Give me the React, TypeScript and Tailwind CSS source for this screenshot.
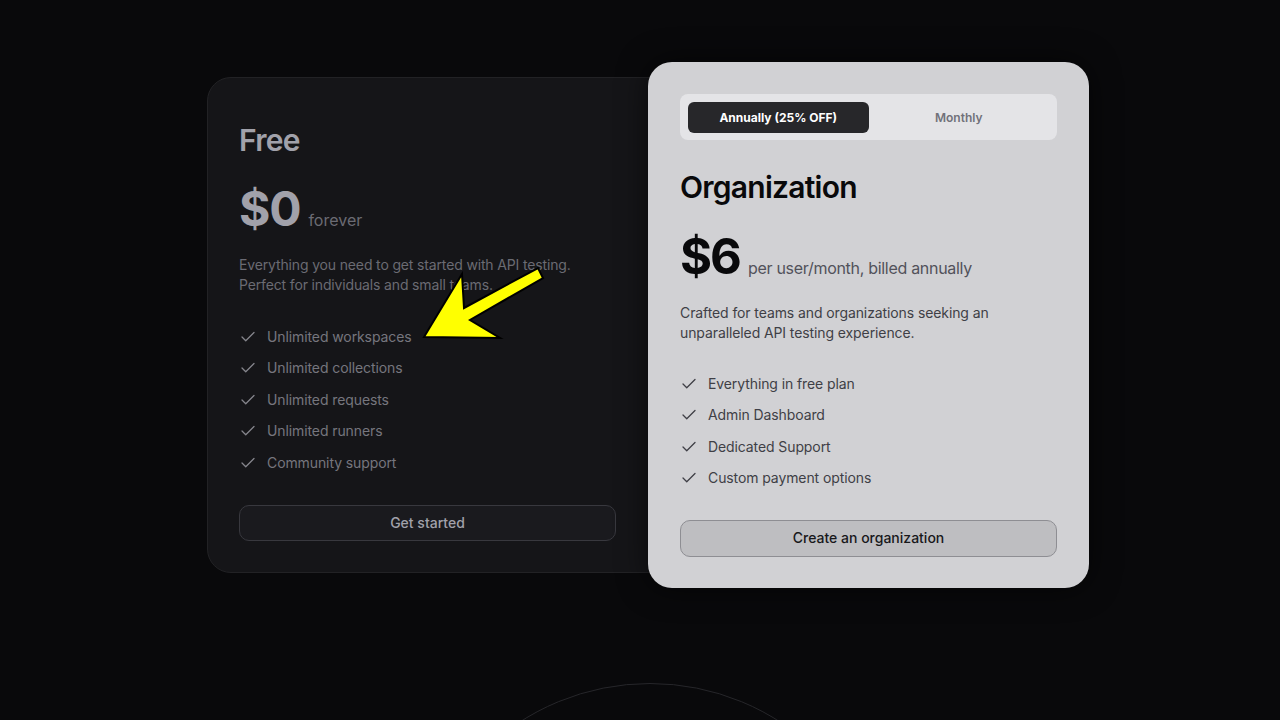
import { Check } from "lucide-react";

const freeFeatures = [
  "Unlimited workspaces",
  "Unlimited collections",
  "Unlimited requests",
  "Unlimited runners",
  "Community support",
];

const orgFeatures = [
  "Everything in free plan",
  "Admin Dashboard",
  "Dedicated Support",
  "Custom payment options",
];

export default function App() {
  return (
    <div className="relative w-full h-[720px] overflow-hidden bg-[#09090b] font-[Inter,'Noto_Sans',sans-serif]">
      <div className="flex justify-center items-center pt-[62px] pl-4">
        {/* Free card */}
        <div className="w-[465px] -mr-[24px] h-[496px] rounded-[24px] border border-[#222225] bg-[#151518] pl-[31px] pr-[55px] pt-[44px] flex flex-col">
          <h2 className="text-[30px] leading-[36px] font-semibold tracking-tight text-[#a1a1aa]">Free</h2>
          <div className="mt-[27px] flex items-baseline gap-2">
            <span className="text-[48px] leading-[48px] font-bold tracking-tight text-[#a1a1aa]">$0</span>
            <span className="text-[16px] text-[#6b6b73]">forever</span>
          </div>
          <p className="mt-[22px] text-sm leading-5 tracking-[-0.15px] text-[#6b6b73]">
            Everything you need to get started with API testing.
            <br />
            Perfect for individuals and small teams.
          </p>
          <ul className="mt-8 flex flex-col gap-[11.5px]">
            {freeFeatures.map((f) => (
              <li key={f} className="flex items-center gap-[10px] h-5 text-sm tracking-[-0.1px] text-[#76767e]">
                <Check size={18} strokeWidth={1.75} className="text-[#85858c]" />
                <span>{f}</span>
              </li>
            ))}
          </ul>
          <button className="mt-8 h-9 w-full rounded-[10px] border border-[#38383e] bg-[#1a1a1e] text-sm font-medium text-[#a1a1aa]">
            Get started
          </button>
        </div>

        {/* Organization card */}
        <div className="relative z-10 w-[441px] rounded-[24px] bg-[#d1d1d4] px-8 pt-8 pb-[31px] shadow-[0_0_30px_rgba(0,0,0,0.6)] flex flex-col">
          <div className="h-[46px] rounded-lg bg-[#e4e4e7] px-2 pt-2 pb-[7px] flex">
            <div className="flex-1 rounded-md bg-[#27272a] text-white text-xs font-bold flex items-center justify-center">
              Annually (25% OFF)
            </div>
            <div className="flex-1 text-xs font-semibold text-[#71717a] flex items-center justify-center">
              Monthly
            </div>
          </div>
          <h2 className="mt-[29px] text-[30px] leading-[36px] font-semibold tracking-tight text-[#09090b]">Organization</h2>
          <div className="mt-[27px] flex items-baseline gap-2">
            <span className="text-[49px] leading-[50px] font-bold tracking-[-0.04em] text-[#09090b]">$6</span>
            <span className="text-[16px] tracking-[-0.3px] text-[#52525b]">per user/month, billed annually</span>
          </div>
          <p className="mt-[21px] text-sm leading-5 tracking-[-0.1px] text-[#3f3f46]">
            Crafted for teams and organizations seeking an
            <br />
            unparalleled API testing experience.
          </p>
          <ul className="mt-[31px] flex flex-col gap-[11.3px]">
            {orgFeatures.map((f) => (
              <li key={f} className="flex items-center gap-[10px] h-5 text-sm tracking-[-0.1px] text-[#3f3f46]">
                <Check size={18} strokeWidth={1.75} className="text-[#3f3f46]" />
                <span>{f}</span>
              </li>
            ))}
          </ul>
          <button className="mt-8 h-[37px] w-full rounded-[10px] border border-[#8e8e93] bg-[#bebec1] text-sm font-medium text-[#18181b]">
            Create an organization
          </button>
        </div>
      </div>

      {/* decorative arc */}
      <div className="absolute left-[410px] top-[683px] w-[480px] h-[480px] rounded-full border border-[#26262a]" />

      {/* annotation arrow */}
      <svg className="absolute inset-0 w-[1280px] h-[720px] pointer-events-none z-20" viewBox="0 0 1280 720">
        <polygon
          points="424,337 462,274 464,308 538,268 543,278 470,320 500,338"
          fill="#ffff00"
          stroke="#000"
          strokeWidth="2"
          strokeLinejoin="miter"
        />
      </svg>
    </div>
  );
}
